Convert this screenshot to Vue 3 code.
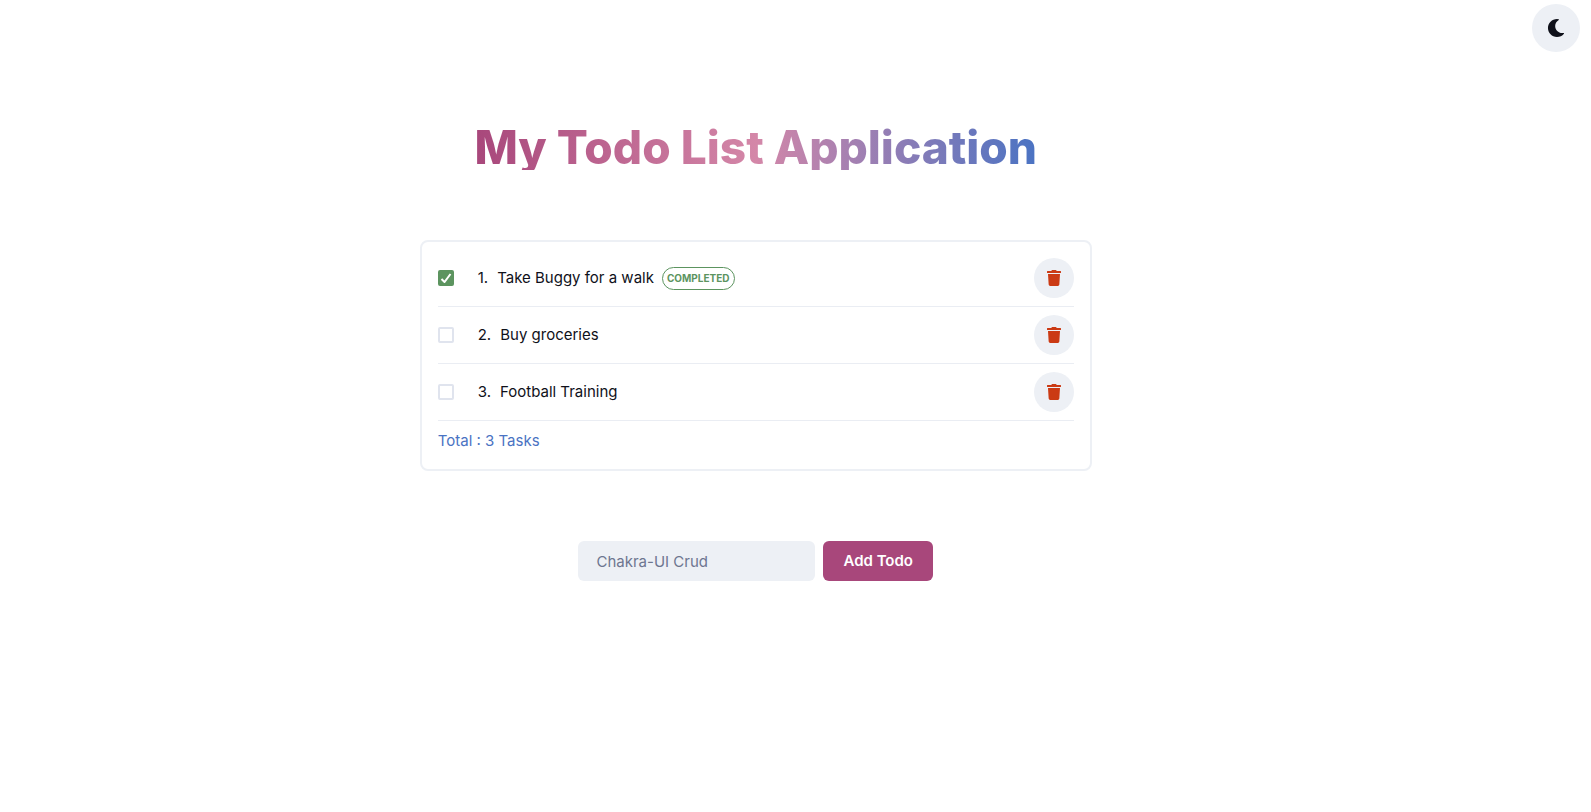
<script setup>
import { computed, ref } from 'vue'

const todos = ref([
  { id: 1, body: 'Take Buggy for a walk', done: true },
  { id: 2, body: 'Buy groceries', done: false },
  { id: 3, body: 'Football Training', done: false },
])
const draft = ref('')
const total = computed(() => todos.value.length)

function addTodo() {
  const body = draft.value.trim()
  if (!body) return
  todos.value.push({ id: Date.now(), body, done: false })
  draft.value = ''
}

function removeTodo(id) {
  todos.value = todos.value.filter((todo) => todo.id !== id)
}
</script>

<template>
  <div class="page">
    <header class="toolbar">
      <button class="round theme" type="button" aria-label="Switch to dark mode">
        <svg viewBox="0 0 512 512" width="18" height="18" aria-hidden="true">
          <path d="M283.211 512c78.962 0 151.079-35.925 198.857-94.792 7.068-8.708-.639-21.43-11.562-19.35-124.203 23.654-238.262-71.576-238.262-196.954 0-72.222 38.662-138.635 101.498-174.394 9.686-5.512 7.25-20.197-3.756-22.23A258.156 258.156 0 0 0 283.211 0c-141.309 0-256 114.511-256 256 0 141.309 114.511 256 256 256z" />
        </svg>
      </button>
    </header>

    <main class="content">
      <h1 class="title">My Todo List Application</h1>

      <section class="card">
        <ul class="list">
          <li v-for="(todo, index) in todos" :key="todo.id" class="row">
            <span class="tick">
              <input :id="`todo-${todo.id}`" v-model="todo.done" class="check" type="checkbox" />
              <svg v-if="todo.done" class="mark" viewBox="0 0 12 10" width="12" height="10" aria-hidden="true">
                <polyline points="1.5 6 4.5 9 10.5 1" />
              </svg>
            </span>
            <label class="label" :for="`todo-${todo.id}`">
              <span>{{ index + 1 }}.</span>
              <span>{{ todo.body }}</span>
            </label>
            <span v-if="todo.done" class="badge">Completed</span>
            <button class="round remove" type="button" :aria-label="`Delete ${todo.body}`" @click="removeTodo(todo.id)">
              <svg viewBox="0 0 448 512" width="14" height="16" aria-hidden="true">
                <path d="M432 32H312l-9.4-18.7A24 24 0 0 0 281.1 0H166.8a23.72 23.72 0 0 0-21.4 13.3L136 32H16A16 16 0 0 0 0 48v32a16 16 0 0 0 16 16h416a16 16 0 0 0 16-16V48a16 16 0 0 0-16-16zM53.2 467a48 48 0 0 0 47.9 45h245.8a48 48 0 0 0 47.9-45L416 128H32z" />
              </svg>
            </button>
          </li>
        </ul>
        <p class="total">Total : {{ total }} Tasks</p>
      </section>

      <form class="form" @submit.prevent="addTodo">
        <input v-model="draft" class="field" type="text" placeholder="Chakra-UI Crud" aria-label="New todo" />
        <button class="add" type="submit">Add Todo</button>
      </form>
    </main>
  </div>
</template>

<style>
body {
  margin: 0;
  background: #fff;
}
</style>

<style scoped>
.page {
  color: #0f111a;
  font: 400 15px/24px Inter, "Liberation Sans", sans-serif;
}

.page * {
  box-sizing: border-box;
}

.toolbar {
  display: flex;
  justify-content: flex-end;
  padding: 4px 11px 0;
}

.round {
  display: grid;
  place-items: center;
  flex: none;
  padding: 0;
  border: 0;
  border-radius: 50%;
  background: #edf0f5;
  color: inherit;
  cursor: pointer;
}

.round svg {
  display: block;
  fill: currentColor;
}

.theme {
  width: 48px;
  height: 48px;
}

.content {
  display: flex;
  flex-direction: column;
  align-items: center;
  gap: 70px;
  padding: 70px 5% 70px 0;
}

.title {
  margin: 0;
  padding-top: 2px;
  font-size: 46px;
  font-weight: 800;
  line-height: 46px;
  background: linear-gradient(to right, #a8477b, #d487a8 50%, #4a73c3);
  -webkit-background-clip: text;
  background-clip: text;
  color: transparent;
}

.card {
  width: 100%;
  max-width: 672px;
  padding: 16px;
  border: 2px solid #edf0f5;
  border-radius: 8px;
}

.list {
  margin: 0;
  padding: 0;
  list-style: none;
}

.row {
  display: flex;
  align-items: center;
  gap: 8px;
  margin-bottom: 8px;
  padding-bottom: 8px;
  border-bottom: 1px solid #eaedf3;
}

.tick {
  display: grid;
  place-items: center;
  flex: none;
  margin-right: 16px;
}

.check,
.mark {
  grid-area: 1 / 1;
}

.check {
  appearance: none;
  width: 16px;
  height: 16px;
  margin: 0;
  border: 2px solid #e0e4ee;
  border-radius: 2px;
  background: #fff;
}

.check:checked {
  border-color: #5c945f;
  background: #5c945f;
}

.mark {
  fill: none;
  stroke: #fff;
  stroke-width: 2;
  pointer-events: none;
}

.label {
  display: flex;
  gap: 9px;
}

.badge {
  padding: 0 4px;
  border: 1px solid #5c945f;
  border-radius: 12px;
  color: #5c945f;
  font-size: 10px;
  font-weight: 700;
  line-height: 21px;
  text-transform: uppercase;
}

.remove {
  width: 40px;
  height: 40px;
  margin-left: auto;
  color: #cb3a14;
}

.total {
  margin: 0;
  color: #4a73c3;
}

.form {
  display: flex;
  gap: 8px;
}

.field,
.add {
  height: 40px;
  border: 0;
  border-radius: 6px;
  font: inherit;
}

.field {
  width: 237px;
  padding: 0 18px;
  background: #edf0f5;
  color: inherit;
}

.field::placeholder {
  color: #6d7690;
  opacity: 1;
}

.add {
  padding: 0 20px;
  background: #a8477b;
  color: #fff;
  font-weight: 600;
  cursor: pointer;
}
</style>
